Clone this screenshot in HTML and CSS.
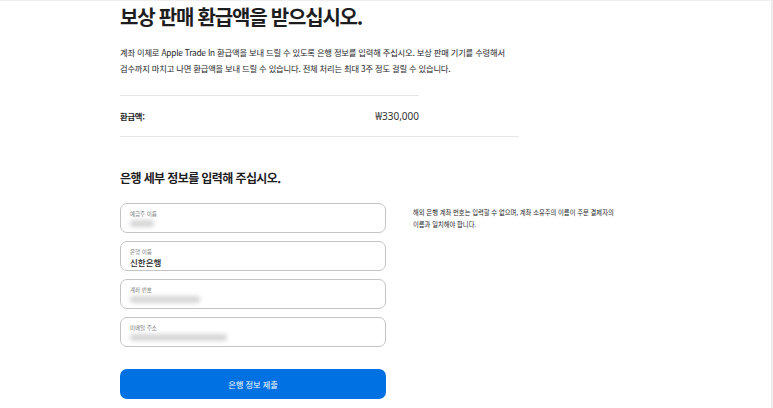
FILE: index.html
```html
<!DOCTYPE html>
<html lang="ko">
<head>
<meta charset="utf-8">
<title>보상 판매 환급액</title>
<link rel="stylesheet" href="styles.css">
</head>
<body>
<div class="frame">
  <main class="page">
    <h1 class="title">보상 판매 환급액을 받으십시오.</h1>
    <p class="intro">계좌 이체로 Apple Trade In 환급액을 보내 드릴 수 있도록 은행 정보를 입력해 주십시오. 보상 판매 기기를 수령해서<br>검수까지 마치고 나면 환급액을 보내 드릴 수 있습니다. 전체 처리는 최대 3주 정도 걸릴 수 있습니다.</p>

    <div class="summary">
      <div class="summary-row">
        <span class="summary-label">환급액:</span>
        <span class="summary-value">₩330,000</span>
      </div>
    </div>
    <div class="divider-long"></div>

    <h2 class="subtitle">은행 세부 정보를 입력해 주십시오.</h2>

    <div class="form-area">
      <div class="fields">
        <div class="field">
          <span class="field-label">예금주 이름</span>
          <span class="blur b1"></span>
        </div>
        <div class="field">
          <span class="field-label">은행 이름</span>
          <span class="field-value">신한은행</span>
        </div>
        <div class="field">
          <span class="field-label">계좌 번호</span>
          <span class="blur b2"></span>
        </div>
        <div class="field">
          <span class="field-label">이메일 주소</span>
          <span class="blur b3"></span>
        </div>
        <button class="submit" type="button">은행 정보 제출</button>
      </div>
      <p class="note">해외 은행 계좌 번호는 입력할 수 없으며, 계좌 소유주의 이름이 주문 결제자의<br>이름과 일치해야 합니다.</p>
    </div>
  </main>
</div>
</body>
</html>
```

FILE: styles.css
```css
html, body {
  margin: 0;
  padding: 0;
  background: #fff;
}
body {
  font-family: "Noto Sans CJK KR", "Noto Sans", sans-serif;
  color: #1d1d1f;
}
.frame {
  height: 407px;
  border-top: 1px solid #efefef;
  border-right: 2px solid #ececec;
  overflow: hidden;
  box-sizing: content-box;
  width: 771px;
}
.page {
  padding-left: 120px;
  padding-top: 3px;
}
.title {
  margin: 0;
  font-size: 20px;
  line-height: 26px;
  font-weight: 700;
  letter-spacing: -1.2px;
}
.intro {
  margin: 14px 0 0;
  font-size: 8.3px;
  line-height: 16px;
  letter-spacing: -0.2px;
}
.summary {
  margin-top: 19px;
  width: 299px;
  border-top: 1px solid #e6e6e6;
}
.summary-row {
  display: flex;
  justify-content: space-between;
  align-items: center;
  height: 40px;
  font-size: 8.3px;
}
.summary-label {
  font-weight: 700;
  letter-spacing: -0.2px;
}
.summary-value {
  font-family: "Noto Sans", sans-serif;
  color: #333;
  font-size: 10px;
}
.divider-long {
  width: 399px;
  height: 1px;
  background: #e6e6e6;
}
.subtitle {
  margin: 32px 0 0;
  font-size: 12px;
  line-height: 18px;
  font-weight: 700;
  letter-spacing: -0.6px;
}
.form-area {
  display: flex;
  align-items: flex-start;
  gap: 27px;
  margin-top: 16px;
}
.fields {
  display: flex;
  flex-direction: column;
  gap: 8px;
  width: 266px;
}
.field {
  box-sizing: border-box;
  height: 30px;
  border: 1px solid #c4c4c4;
  border-radius: 7px;
  padding: 6px 9px 0;
  display: flex;
  flex-direction: column;
}
.field-label {
  font-size: 5.5px;
  line-height: 8px;
  color: #7a7a7a;
}
.field-value {
  font-size: 8.5px;
  line-height: 12px;
  color: #1d1d1f;
  font-weight: 500;
}
.blur {
  display: block;
  margin-top: 2px;
  height: 7px;
  background: #d6d6d6;
  filter: blur(2px);
  border-radius: 3px;
}
.b1 { width: 24px; }
.b2 { width: 70px; }
.b3 { width: 97px; }
.submit {
  margin-top: 14px;
  height: 30px;
  border: none;
  border-radius: 7px;
  background: #0071e3;
  color: #fff;
  font-family: "Noto Sans CJK KR", sans-serif;
  font-size: 8.3px;
  letter-spacing: -0.1px;
  padding: 0;
}
.note {
  margin: 4px 0 0;
  font-size: 6.3px;
  line-height: 12px;
  color: #1d1d1f;
}
```
